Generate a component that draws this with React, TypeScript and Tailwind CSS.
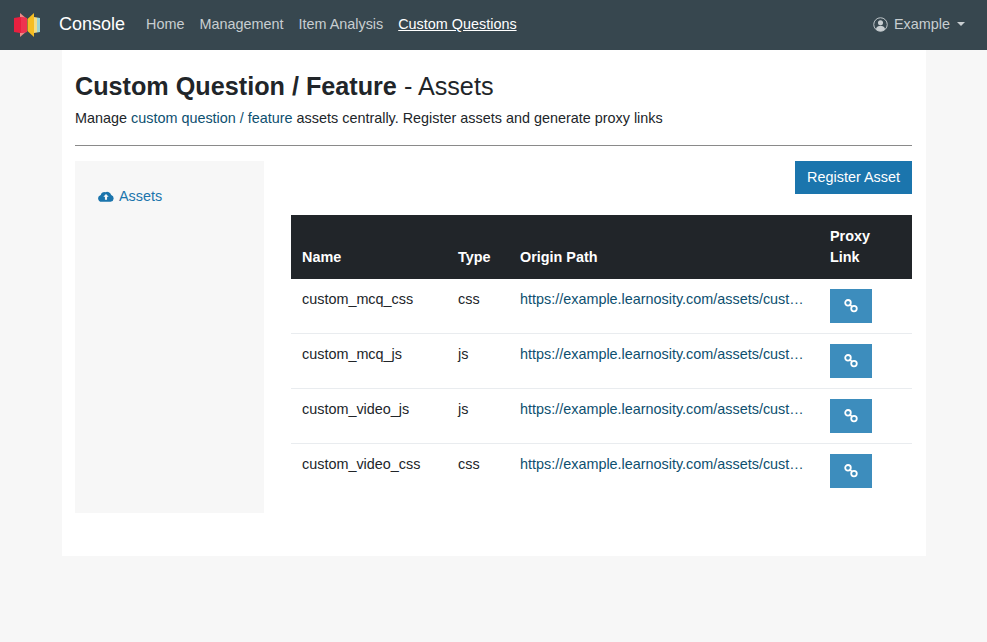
import React from 'react';

// ---------------------------------------------------------------------------
// Data
// ---------------------------------------------------------------------------

const assets = [
  { name: 'custom_mcq_css', type: 'css' },
  { name: 'custom_mcq_js', type: 'js' },
  { name: 'custom_video_js', type: 'js' },
  { name: 'custom_video_css', type: 'css' },
];

// ---------------------------------------------------------------------------
// Icons
// ---------------------------------------------------------------------------

const Logo = () => (
  <svg width="28" height="26" viewBox="0 0 28 26">
    <polygon points="7,1 14,7 14,19 7,25" fill="#ee8a86" />
    <polygon points="1,6 7,5 14,6 14,20 7,21 1,20" fill="#e8203f" />
    <polygon points="8,5 14,6 14,20 8,21" fill="#ee3350" />
    <polygon points="14.5,7 21,1 21,25 14.5,19" fill="#f6bd22" />
    <polygon points="21,5 24,5.5 24,20.5 21,21" fill="#f3dc86" />
    <polygon points="24,5.5 27,6 27,20 24,20.5" fill="#9bd3d6" />
  </svg>
);

const UserCircle = () => (
  <svg width="15" height="15" viewBox="0 0 16 16" fill="none">
    <circle cx="8" cy="8" r="7.2" stroke="#c8ced1" strokeWidth="1" />
    <circle cx="8" cy="6.2" r="2.7" fill="#c8ced1" />
    <path d="M3 13c.8-2.6 2.8-3.6 5-3.6s4.2 1 5 3.6a7 7 0 0 1-10 0z" fill="#c8ced1" />
  </svg>
);

const CloudUpload = () => (
  <svg width="16" height="12" viewBox="0 0 15 11">
    <path
      d="M3.4 11A3.3 3.3 0 0 1 2.6 4.5 3.3 3.3 0 0 1 6.8 2 3.9 3.9 0 0 1 12.4 4.6 3.3 3.3 0 0 1 11.8 11z"
      fill="#1b75ad"
    />
    <path d="M7.5 3.6 10 6.2H8.5V9h-2V6.2H5z" fill="#f7f7f7" />
  </svg>
);

const ChainLink = () => (
  <svg width="14" height="14" viewBox="0 0 14 14" fill="none" stroke="#fff" strokeWidth="1.8">
    <circle cx="4" cy="3.8" r="2.8" />
    <circle cx="10" cy="9.6" r="2.8" />
    <path d="M5.6 5.4 8.4 8" strokeWidth="1.6" />
  </svg>
);

// ---------------------------------------------------------------------------
// Component
// ---------------------------------------------------------------------------

const App: React.FC = () => {
  return (
    <div className="min-h-[642px] bg-[#f7f7f7] font-['Liberation_Sans',Arial,sans-serif] text-[14.4px] text-[#212529]">
      {/* Navbar */}
      <nav className="h-[50px] bg-[#37474f] flex items-center pl-[13px] pr-[22px] pb-[1px]">
        <Logo />
        <span className="ml-[18px] text-[18px] text-white">Console</span>
        <div className="ml-[21px] flex items-center gap-[15px] text-[#c8ced1]">
          <span>Home</span>
          <span>Management</span>
          <span>Item Analysis</span>
          <span className="text-white underline">Custom Questions</span>
        </div>
        <div className="ml-auto flex items-center text-[#c8ced1]">
          <UserCircle />
          <span className="ml-[6px]">Example</span>
          <span className="ml-[7px] w-0 h-0 border-x-[4px] border-x-transparent border-t-[4px] border-t-[#c8ced1]" />
        </div>
      </nav>

      {/* Page */}
      <main className="ml-[62px] w-[864px] h-[506px] bg-white pl-[13px] pr-[14px]">
        <h1 className="pt-[20px] text-[25.2px] leading-[32px]">
          <span className="font-bold">Custom Question / Feature</span> - Assets
        </h1>
        <p className="mt-[6px] leading-[21px]">
          Manage <span className="text-[#0d4f6f]">custom question / feature</span> assets centrally. Register assets and generate proxy links
        </p>
        <hr className="mt-[16px] border-[#8a8a8a]" />

        <div className="mt-[15px] flex">
          <aside className="w-[189px] h-[352px] bg-[#f7f7f7] pl-[23px] pt-[25px]">
            <div className="flex items-center gap-[5px] text-[#1b75ad] leading-[20px]">
              <CloudUpload />
              <span>Assets</span>
            </div>
          </aside>

          <section className="ml-[27px] w-[621px]">
            <div className="flex justify-end">
              <button className="h-[33px] w-[117px] bg-[#1b75ad] text-white">Register Asset</button>
            </div>
            <table className="mt-[21px] w-full table-fixed border-separate border-spacing-0">
              <thead>
                <tr className="h-[64px] bg-[#212529] text-white text-left align-bottom">
                  <th className="w-[156px] pl-[11px] pb-[10px] font-bold">Name</th>
                  <th className="w-[62px] pl-[11px] pb-[10px] font-bold">Type</th>
                  <th className="w-[310px] pl-[11px] pb-[10px] font-bold">Origin Path</th>
                  <th className="pl-[11px] pb-[11px] font-bold leading-[21px]">Proxy<br />Link</th>
                </tr>
              </thead>
              <tbody>
                {assets.map((a, i) => {
                  const border = i < assets.length - 1 ? 'border-b border-[#e9ecef]' : '';
                  return (
                    <tr key={a.name} className="align-top">
                      <td className={`h-[55px] pl-[11px] pt-[10px] leading-[21px] ${border}`}>{a.name}</td>
                      <td className={`h-[55px] pl-[11px] pt-[10px] leading-[21px] ${border}`}>{a.type}</td>
                      <td className={`h-[55px] pl-[11px] pt-[10px] leading-[21px] ${border}`}>
                        <div className="w-[285px] truncate text-[#0d4f6f]">https://example.learnosity.com/assets/custom_questions/{a.name}</div>
                      </td>
                      <td className={`h-[55px] pl-[11px] pt-[10px] ${border}`}>
                        <button className="w-[42px] h-[34px] bg-[#3d8dbd] flex items-center justify-center">
                          <ChainLink />
                        </button>
                      </td>
                    </tr>
                  );
                })}
              </tbody>
            </table>
          </section>
        </div>
      </main>
    </div>
  );
};

export default App;
